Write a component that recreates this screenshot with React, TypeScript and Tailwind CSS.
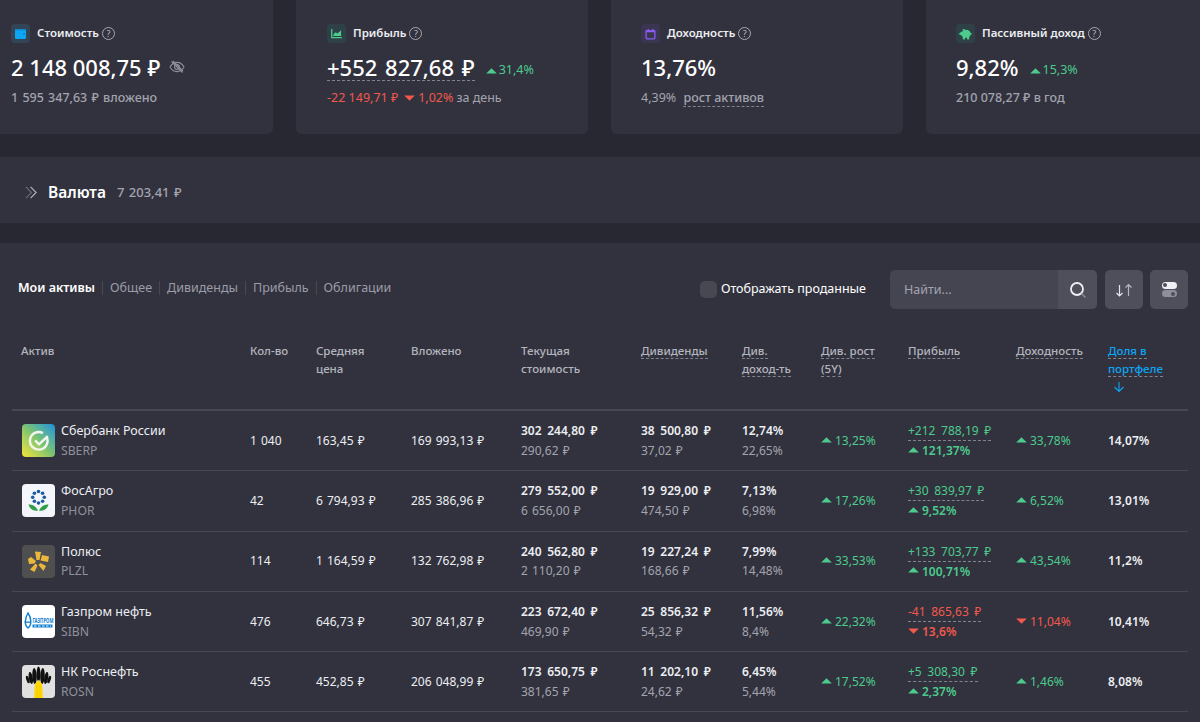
import React from 'react';

const FONT = "font-['Noto_Sans',sans-serif]";

const Up = ({ className = '' }: { className?: string }) => (
  <svg viewBox="0 0 11 6" className={`w-[11px] h-[6px] shrink-0 ${className}`}>
    <path d="M5.5 0.2 L10.8 5.6 L0.2 5.6 Z" fill="#4ccb8d" />
  </svg>
);

const Down = ({ className = '' }: { className?: string }) => (
  <svg viewBox="0 0 11 6" className={`w-[11px] h-[6px] shrink-0 ${className}`}>
    <path d="M5.5 5.8 L10.8 0.4 L0.2 0.4 Z" fill="#f0594c" />
  </svg>
);

const Hint = () => (
  <span className="ml-[3px] w-[13px] h-[13px] rounded-full border border-[#a6a8b0] text-[#b8bac2] text-[9px] leading-[11px] text-center">?</span>
);

const WalletIcon = () => (
  <svg viewBox="0 0 11 10" className="w-[11px] h-[10px]"><rect x="0" y="0" width="11" height="10" rx="1.5" fill="#0ea5f5" /><rect x="0" y="0" width="11" height="1.5" fill="#0b8ad0" /><rect x="8" y="4" width="2" height="2" fill="#0b8ad0" /></svg>
);
const ChartIcon = () => (
  <svg viewBox="0 0 12 12" className="w-[11px] h-[11px]"><path d="M0.8 1v9.6h11" stroke="#4ccb8d" strokeWidth="1.4" fill="none" /><path d="M2.5 8.8V7L5 4.5 7 6 11 2.5V8.8Z" fill="#4ccb8d" /></svg>
);
const CalendarIcon = () => (
  <svg viewBox="0 0 12 12" className="w-[11px] h-[12px]"><rect x="1.2" y="2.4" width="9.6" height="8.8" rx="0.8" stroke="#8b5cf6" strokeWidth="1.4" fill="none" /><path d="M1.2 3.2h9.6" stroke="#8b5cf6" strokeWidth="1.8" /><path d="M3.5 0.4v2M8.5 0.4v2" stroke="#8b5cf6" strokeWidth="1.2" /></svg>
);
const PiggyIcon = () => (
  <svg viewBox="0 0 13 12" className="w-[13px] h-[12px]" fill="#4ccb8d">
    <ellipse cx="7" cy="5.8" rx="4.8" ry="4" />
    <rect x="3.8" y="8" width="2.2" height="3.4" />
    <rect x="8" y="8" width="2.2" height="3.4" />
    <path d="M0.2 5.2 3 3.4V7.6L0.2 6.6Z" />
    <path d="M3.4 1 6.4 1.6 4.4 3.6Z" />
    <path d="M11.4 5.2h1.4v1.2h-1.4Z" />
  </svg>
);

const CardIcon = ({ bg, children }: { bg: string; children: React.ReactNode }) => (
  <span className={`w-[19px] h-[19px] rounded-[4px] flex items-center justify-center ${bg}`}>{children}</span>
);

const Card = ({ icon, title, children, pad = 'pl-[30px]' }: { icon: React.ReactNode; title: string; children: React.ReactNode; pad?: string }) => (
  <div className={`w-[292px] h-[134px] shrink-0 bg-[#32323e] rounded-b-[6px] pt-[24px] ${pad}`}>
    <div className="flex items-center h-[19px]">
      {icon}
      <span className="ml-[7px] mb-[2px] text-[11.5px] font-semibold text-[#eceef2]">{title}</span>
      <Hint />
    </div>
    {children}
  </div>
);

const assets = [
  { name: 'Сбербанк России', tick: 'SBERP', qty: '1 040', avg: '163,45 ₽', inv: '169 993,13 ₽', cur: '302 244,80 ₽', curSub: '290,62 ₽', div: '38 500,80 ₽', divSub: '37,02 ₽', yld: '12,74%', yldSub: '22,65%', grow: '13,25%', prof: '+212 788,19 ₽', profP: '121,37%', ret: '33,78%', share: '14,07%', neg: false },
  { name: 'ФосАгро', tick: 'PHOR', qty: '42', avg: '6 794,93 ₽', inv: '285 386,96 ₽', cur: '279 552,00 ₽', curSub: '6 656,00 ₽', div: '19 929,00 ₽', divSub: '474,50 ₽', yld: '7,13%', yldSub: '6,98%', grow: '17,26%', prof: '+30 839,97 ₽', profP: '9,52%', ret: '6,52%', share: '13,01%', neg: false },
  { name: 'Полюс', tick: 'PLZL', qty: '114', avg: '1 164,59 ₽', inv: '132 762,98 ₽', cur: '240 562,80 ₽', curSub: '2 110,20 ₽', div: '19 227,24 ₽', divSub: '168,66 ₽', yld: '7,99%', yldSub: '14,48%', grow: '33,53%', prof: '+133 703,77 ₽', profP: '100,71%', ret: '43,54%', share: '11,2%', neg: false },
  { name: 'Газпром нефть', tick: 'SIBN', qty: '476', avg: '646,73 ₽', inv: '307 841,87 ₽', cur: '223 672,40 ₽', curSub: '469,90 ₽', div: '25 856,32 ₽', divSub: '54,32 ₽', yld: '11,56%', yldSub: '8,4%', grow: '22,32%', prof: '-41 865,63 ₽', profP: '13,6%', ret: '11,04%', share: '10,41%', neg: true },
  { name: 'НК Роснефть', tick: 'ROSN', qty: '455', avg: '452,85 ₽', inv: '206 048,99 ₽', cur: '173 650,75 ₽', curSub: '381,65 ₽', div: '11 202,10 ₽', divSub: '24,62 ₽', yld: '6,45%', yldSub: '5,44%', grow: '17,52%', prof: '+5 308,30 ₽', profP: '2,37%', ret: '1,46%', share: '8,08%', neg: false },
];

const Logo = ({ tick }: { tick: string }) => {
  if (tick === 'SBERP') {
    return (
      <div className="w-[33px] h-[33px] rounded-[4px] bg-gradient-to-tr from-[#f5e625] via-[#7cc46e] to-[#1a8ed8] flex items-center justify-center">
        <svg viewBox="0 0 20 20" className="w-[22px] h-[22px]" fill="none" stroke="#f4f6ee" strokeWidth="2.2"><path d="M17 6.5A8 8 0 1 1 13.5 2.8" /><path d="M6.5 9.5 10 13 18 5.5" /></svg>
      </div>
    );
  }
  if (tick === 'PHOR') {
    return (
      <div className="w-[33px] h-[33px] rounded-[4px] bg-[#f3f6fb]">
        <svg viewBox="0 0 33 33" className="w-[33px] h-[33px]">
          <g fill="#1d5a9e">
            <circle cx="16.5" cy="7.5" r="1.8" /><circle cx="20.6" cy="9.2" r="1.8" /><circle cx="22.3" cy="13.2" r="1.8" /><circle cx="20.6" cy="17.2" r="1.8" /><circle cx="16.5" cy="19" r="1.8" /><circle cx="12.4" cy="17.2" r="1.8" /><circle cx="10.7" cy="13.2" r="1.8" /><circle cx="12.4" cy="9.2" r="1.8" />
          </g>
          <path d="M16 26.5C13.5 21.5 10 20.5 6.5 20.5 7.5 24.5 11 27.5 16 26.5Z" fill="#2f9e44" />
          <path d="M17 26.5C19.5 21.5 23 20.5 26.5 20.5 25.5 24.5 22 27.5 17 26.5Z" fill="#2f9e44" />
        </svg>
      </div>
    );
  }
  if (tick === 'PLZL') {
    return (
      <div className="w-[33px] h-[33px] rounded-[4px] bg-[#4f4f4f]">
        <svg viewBox="0 0 33 33" className="w-[33px] h-[33px]" fill="#eab83c">
          <path d="M13 6.500 19 7 17.500 15 14.500 15Z" />
          <path d="M20 10 27 11.500 26 17 18.500 15.500Z" />
          <path d="M18.500 18 24 21 21.500 26 16.500 20Z" />
          <path d="M13.500 18.500 15.500 20.500 12.500 27 8 24.500Z" />
          <path d="M6 14 9 12 14 16 12.500 18.500 7 19Z" />
        </svg>
      </div>
    );
  }
  if (tick === 'SIBN') {
    return (
      <div className="w-[33px] h-[33px] rounded-[4px] bg-white">
        <svg viewBox="0 0 33 33" className="w-[33px] h-[33px]">
          <path d="M6 8C3 13 2 20 6 23 10 20 9.500 13 6 8Z" fill="none" stroke="#0f7fd1" strokeWidth="1.4" />
          <path d="M2.500 16.500h6.500v1.300H2.500Z" fill="#0f7fd1" />
          <text x="10.500" y="12" fontSize="4.300" fontWeight="700" fill="#0f7fd1" transform="scale(1 1.500)">ГАЗПРОМ</text>
          <rect x="10.500" y="19.500" width="20" height="3" fill="#0f7fd1" />
          <path d="M12 21h17" stroke="#fff" strokeWidth="0.9" strokeDasharray="2.500 1.500" />
        </svg>
      </div>
    );
  }
  return (
    <div className="w-[33px] h-[33px] rounded-[4px] bg-[#e0e0e0]">
      <svg viewBox="0 0 33 33" className="w-[33px] h-[33px]">
        <g fill="#111">
          <ellipse cx="16.500" cy="9" rx="2" ry="7.500" />
          <ellipse cx="12.500" cy="11" rx="2.200" ry="8" transform="rotate(-3 12.500 11)" />
          <ellipse cx="20.500" cy="11" rx="2.200" ry="8" transform="rotate(3 20.500 11)" />
          <ellipse cx="8.800" cy="13" rx="2" ry="6" transform="rotate(-10 8.800 13)" />
          <ellipse cx="24.200" cy="13" rx="2" ry="6" transform="rotate(10 24.200 13)" />
          <ellipse cx="5.800" cy="14.500" rx="1.500" ry="4" transform="rotate(-18 5.800 14.500)" />
          <ellipse cx="27.200" cy="14.500" rx="1.500" ry="4" transform="rotate(18 27.200 14.500)" />
        </g>
        <path d="M13 19 16.500 15 20 19 21 33H12Z" fill="#ffd800" />
        <path d="M15 20v13M18 20v13" stroke="#e6b800" strokeWidth="0.5" />
      </svg>
    </div>
  );
};

const Dashed = ({ children, className = '' }: { children: React.ReactNode; className?: string }) => (
  <span className={`border-b border-dashed border-[#80828c] ${className}`}>{children}</span>
);

const GRID = 'grid grid-cols-[228px_66px_95px_110px_120px_101px_79px_87px_108px_92px_1fr]';

const Stat = ({ value, neg }: { value: string; neg?: boolean }) => (
  <div className={`flex items-center gap-[3px] ${neg ? 'text-[#f0594c]' : 'text-[#4ccb8d]'}`}>
    {neg ? <Down className="mb-[2px]" /> : <Up className="mb-[2px]" />}
    <span>{value}</span>
  </div>
);

const Row = ({ a }: { a: (typeof assets)[number] }) => (
  <div className={`${GRID} h-[60.3px] items-center pl-[10px] border-b border-[#484852] text-[12px] text-[#eceef2]`}>
    <div className="flex items-center gap-[6px]">
      <Logo tick={a.tick} />
      <div className="leading-[19.5px]">
        <div className="text-[12.5px]">{a.name}</div>
        <div className="text-[#8f919b] text-[12.2px]">{a.tick}</div>
      </div>
    </div>
    <div className="[word-spacing:1px]">{a.qty}</div>
    <div className="[word-spacing:1px]">{a.avg}</div>
    <div className="[word-spacing:1px]">{a.inv}</div>
    <div className="leading-[19.5px]">
      <div className="font-semibold [word-spacing:2.5px]">{a.cur}</div>
      <div className="text-[#a2a4ae] [word-spacing:1px]">{a.curSub}</div>
    </div>
    <div className="leading-[19.5px]">
      <div className="font-semibold [word-spacing:2.5px]">{a.div}</div>
      <div className="text-[#a2a4ae] [word-spacing:1px]">{a.divSub}</div>
    </div>
    <div className="leading-[19.5px]">
      <div className="font-semibold">{a.yld}</div>
      <div className="text-[#a2a4ae]">{a.yldSub}</div>
    </div>
    <Stat value={a.grow} />
    <div className="flex flex-col items-start leading-[19px]">
      <Dashed className={`[word-spacing:2.5px] ${a.neg ? 'text-[#f0594c]' : 'text-[#4ccb8d]'}`}>{a.prof}</Dashed>
      <div className={`flex items-center gap-[3px] font-semibold ${a.neg ? 'text-[#f0594c]' : 'text-[#4ccb8d]'}`}>
        {a.neg ? <Down className="mb-[2px]" /> : <Up className="mb-[2px]" />}
        <span>{a.profP}</span>
      </div>
    </div>
    <Stat value={a.ret} neg={a.neg} />
    <div className="font-semibold">{a.share}</div>
  </div>
);

export default function App() {
  return (
    <div className={`${FONT} w-[1200px] h-[722px] overflow-hidden bg-[#282832]`}>
      {/* Top cards */}
      <div className="flex gap-[23px] -ml-[19px]">
        <Card icon={<CardIcon bg="bg-[#334454]"><WalletIcon /></CardIcon>} title="Стоимость">
          <div className="flex items-center mt-[9px] h-[30px]">
            <span className="text-[22px] font-medium text-white">2 148 008,75 ₽</span>
            <svg viewBox="0 0 16 16" className="ml-[9px] w-[16px] h-[16px]" fill="none" stroke="#8d8f99" strokeWidth="1.1">
              <path d="M1 8s2.6-4.6 7-4.6S15 8 15 8s-2.6 4.6-7 4.600S1 8 1 8Z" />
              <circle cx="8" cy="8" r="2.400" />
              <path d="M2.500 2.500l11 11M4 2l10 10" />
            </svg>
          </div>
          <div className="mt-[7px] text-[12.5px] font-medium text-[#a2a4ae] [word-spacing:1px]">1 595 347,63 ₽ вложено</div>
        </Card>
        <Card pad="pl-[31px]" icon={<CardIcon bg="bg-[#2e4147]"><ChartIcon /></CardIcon>} title="Прибыль">
          <div className="flex items-center mt-[9px] h-[30px]">
            <span className="text-[22px] font-medium text-white border-b border-dashed border-[#80828c] leading-[26px] [word-spacing:2px]">+552 827,68 ₽</span>
            <span className="ml-[11px] mt-[7px] flex items-center gap-[2px] text-[12.5px] text-[#4ccb8d]"><Up />31,4%</span>
          </div>
          <div className="mt-[7px] flex items-center text-[12.5px] text-[#f0594c]">
            <span>-22 149,71 ₽</span>
            <Down className="ml-[6px] mr-[3px]" />
            <span>1,02%</span>
            <span className="ml-[3px] text-[#a2a4ae]">за день</span>
          </div>
        </Card>
        <Card icon={<CardIcon bg="bg-[#3a3550]"><CalendarIcon /></CardIcon>} title="Доходность">
          <div className="flex items-center mt-[9px] h-[30px]">
            <span className="text-[22px] font-medium text-white">13,76%</span>
          </div>
          <div className="mt-[7px] text-[12.5px] text-[#a2a4ae]">
            4,39% <Dashed className="ml-[4px] font-medium">рост активов</Dashed>
          </div>
        </Card>
        <Card icon={<CardIcon bg="bg-[#2e4147]"><PiggyIcon /></CardIcon>} title="Пассивный доход">
          <div className="flex items-center mt-[9px] h-[30px]">
            <span className="text-[22px] font-medium text-white">9,82%</span>
            <span className="ml-[11px] mt-[7px] flex items-center gap-[2px] text-[12.5px] text-[#4ccb8d]"><Up />15,3%</span>
          </div>
          <div className="mt-[7px] text-[12.5px] font-medium text-[#a2a4ae]">210 078,27 ₽ в год</div>
        </Card>
      </div>

      {/* Currency bar */}
      <div className="mt-[23px] h-[66px] bg-[#32323e] flex items-center pl-[25px] pt-[5px]">
        <svg viewBox="0 0 14 14" className="w-[13px] h-[13px]" fill="none" strokeWidth="1.2">
          <path d="M1 1l6 6-6 6" stroke="#6c6e78" />
          <path d="M6 1l6 6-6 6" stroke="#b4b6be" />
        </svg>
        <span className="ml-[10px] text-[15.5px] font-semibold text-white">Валюта</span>
        <span className="ml-[11px] text-[13px] font-medium text-[#a2a4ae] [word-spacing:1px]">7 203,41 ₽</span>
      </div>

      {/* Assets panel */}
      <div className="mt-[20px] h-[479px] bg-[#32323e] px-[12px]">
        <div className="h-[90px] pt-[27px] flex items-start justify-between">
          <div className="flex items-center h-[36px] pl-[6px] text-[12.5px] text-[#9a9ca6]">
            <span className="font-semibold text-white text-[12.5px]">Мои активы</span>
            <span className="ml-[7px] pl-[7px] border-l border-[#484852] leading-[14px]">Общее</span>
            <span className="ml-[7px] pl-[7px] border-l border-[#484852] leading-[14px]">Дивиденды</span>
            <span className="ml-[7px] pl-[7px] border-l border-[#484852] leading-[14px]">Прибыль</span>
            <span className="ml-[7px] pl-[7px] border-l border-[#484852] leading-[14px]">Облигации</span>
          </div>
          <div className="flex items-center h-[39px]">
            <span className="w-[17px] h-[17px] rounded-[5px] bg-[#484852]" />
            <span className="ml-[4px] text-[12.5px] text-white">Отображать проданные</span>
            <div className="ml-[24px] w-[207px] h-[39px] rounded-[5px] bg-[#454552] flex overflow-hidden">
              <span className="flex-1 pl-[14px] text-[12.5px] text-[#a2a4ae] leading-[39px]">Найти...</span>
              <span className="w-[39px] bg-[#4f4f5c] flex items-center justify-center">
                <svg viewBox="0 0 18 18" className="w-[18px] h-[18px]" fill="none" strokeWidth="1.8">
                  <circle cx="8" cy="8" r="6" stroke="#eeeef2" />
                  <path d="M12.500 12.500 16.500 16.500" stroke="#8d8f99" strokeWidth="1.2" />
                </svg>
              </span>
            </div>
            <div className="ml-[8px] w-[38px] h-[39px] rounded-[5px] bg-[#4f4f5c] flex items-center justify-center">
              <svg viewBox="0 0 18 14" className="w-[18px] h-[14px]" fill="none" strokeWidth="1.200">
                <path d="M4.500 2v11M1.500 10l3 3 3-3" stroke="#e4e4ea" />
                <path d="M13.500 13V1.500M10.500 4.500l3-3 3 3" stroke="#b4b6be" />
              </svg>
            </div>
            <div className="ml-[7px] w-[38px] h-[39px] rounded-[5px] bg-[#4f4f5c] flex flex-col items-center justify-center gap-[1.5px]">
              <span className="w-[15px] h-[7px] rounded-full bg-[#f0f0f4] flex items-center pl-[1.5px]"><span className="w-[4px] h-[4px] rounded-full bg-[#4f4f5c]" /></span>
              <span className="w-[15px] h-[7px] rounded-full bg-[#8d8f99] flex items-center justify-end pr-[1.5px]"><span className="w-[4px] h-[4px] rounded-full bg-[#4f4f5c]" /></span>
            </div>
          </div>
        </div>

        {/* Table head */}
        <div className={`${GRID} h-[78px] pl-[10px] border-b-2 border-[#484852] text-[11.5px] font-medium leading-[18px] text-[#b4b6be]`}>
          <div className="pt-[9px] -ml-[1px]">Актив</div>
          <div className="pt-[9px]">Кол-во</div>
          <div className="pt-[9px]">Средняя<br />цена</div>
          <div className="pt-[9px]">Вложено</div>
          <div className="pt-[9px]">Текущая<br />стоимость</div>
          <div className="pt-[9px]"><Dashed>Дивиденды</Dashed></div>
          <div className="pt-[9px]"><Dashed>Див.</Dashed><br /><Dashed>доход-ть</Dashed></div>
          <div className="pt-[9px]"><Dashed>Див. рост</Dashed><br /><Dashed>(5Y)</Dashed></div>
          <div className="pt-[9px]"><Dashed>Прибыль</Dashed></div>
          <div className="pt-[9px]"><Dashed>Доходность</Dashed></div>
          <div className="pt-[9px] text-[#0ea5f5]">
            <Dashed>Доля в</Dashed><br /><Dashed>портфеле</Dashed>
            <svg viewBox="0 0 12 12" className="ml-[5px] mt-[3px] w-[12px] h-[12px]" fill="none" stroke="#0ea5f5" strokeWidth="1.100"><path d="M6 1v9.500M1.500 6 6 10.500 10.500 6" /></svg>
          </div>
        </div>

        {assets.map((a) => (
          <Row key={a.tick} a={a} />
        ))}
      </div>
    </div>
  );
}
